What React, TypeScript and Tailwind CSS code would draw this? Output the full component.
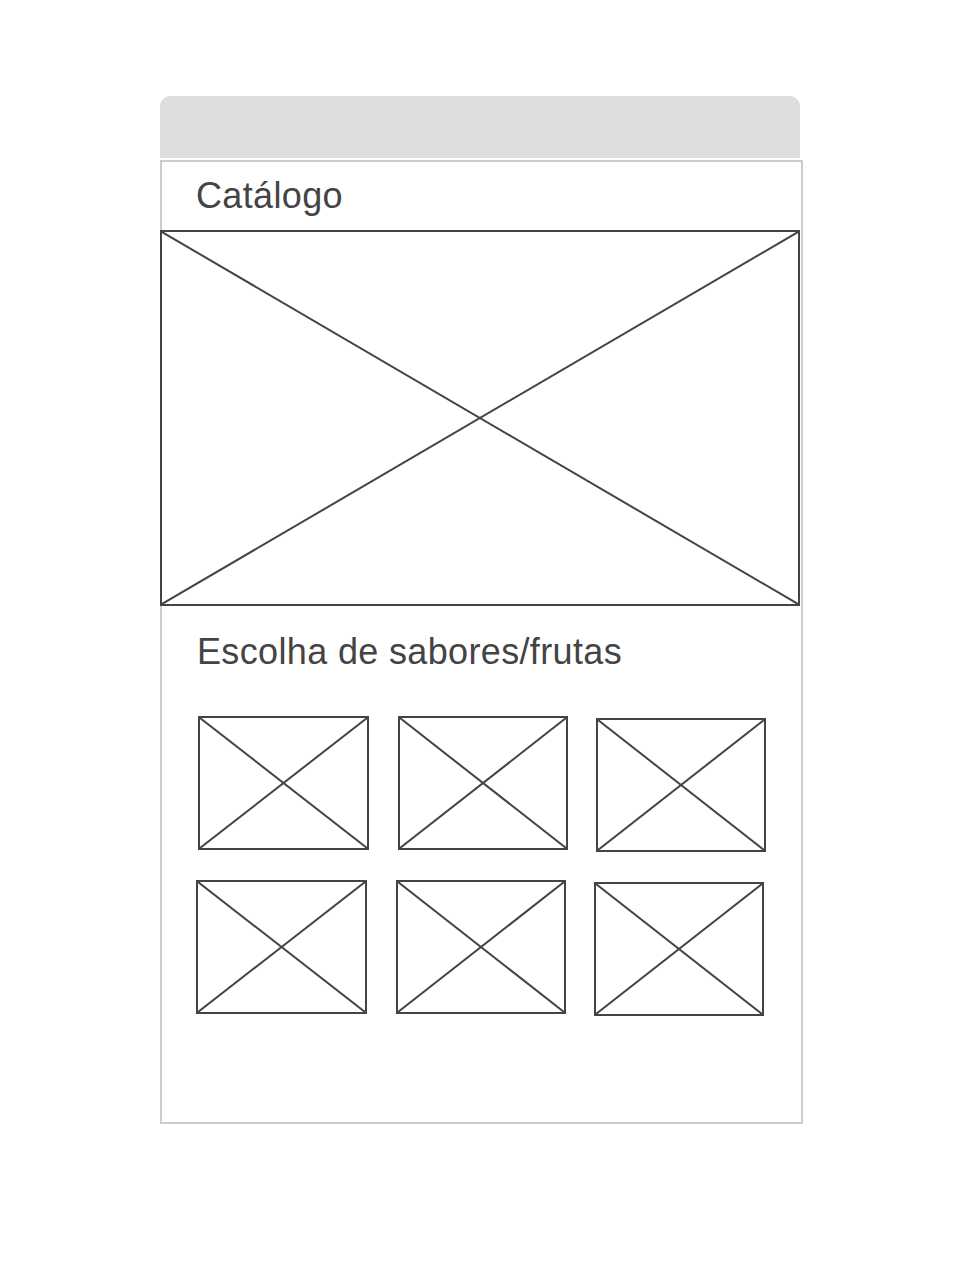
import React from "react"

function Placeholder({ className }: { className: string }) {
  return (
    <div className={`border-2 border-[#444] bg-white ${className}`}>
      <svg className="block h-full w-full" viewBox="0 0 100 100" preserveAspectRatio="none">
        <line x1="0" y1="0" x2="100" y2="100" stroke="#444" strokeWidth="2" vectorEffect="non-scaling-stroke" />
        <line x1="100" y1="0" x2="0" y2="100" stroke="#444" strokeWidth="2" vectorEffect="non-scaling-stroke" />
      </svg>
    </div>
  )
}

export default function App() {
  return (
    <div
      className="min-h-[1280px] w-[960px] bg-white pl-[160px] pt-[96px] text-[#444]"
      style={{ fontFamily: '"Liberation Sans", Arial, sans-serif' }}
    >
      {/* Top bar */}
      <div className="h-[62px] w-[640px] rounded-t-[10px] bg-[#dedede]"></div>

      {/* Catalog frame */}
      <div className="mt-[2px] h-[964px] w-[643px] border-2 border-[#cccccc] bg-white">
        <h1 className="pl-[34px] pt-[16px] text-[36px] leading-[36px] tracking-[0.35px]">Catálogo</h1>

        <Placeholder className="-ml-[2px] mt-[16px] h-[376px] w-[640px]" />

        <h2 className="mt-[28px] pl-[35px] text-[36px] leading-[36px] tracking-[0.35px]">Escolha de sabores/frutas</h2>

        {/* Flavour grid */}
        <div className="mt-[46px] flex items-start pl-[36px]">
          <Placeholder className="h-[134px] w-[171px]" />
          <Placeholder className="ml-[29px] h-[134px] w-[170px]" />
          <Placeholder className="ml-[28px] mt-[2px] h-[134px] w-[170px]" />
        </div>
        <div className="mt-[28px] flex items-start pl-[34px]">
          <Placeholder className="h-[134px] w-[171px]" />
          <Placeholder className="ml-[29px] h-[134px] w-[170px]" />
          <Placeholder className="ml-[28px] mt-[2px] h-[134px] w-[170px]" />
        </div>
      </div>
    </div>
  )
}
